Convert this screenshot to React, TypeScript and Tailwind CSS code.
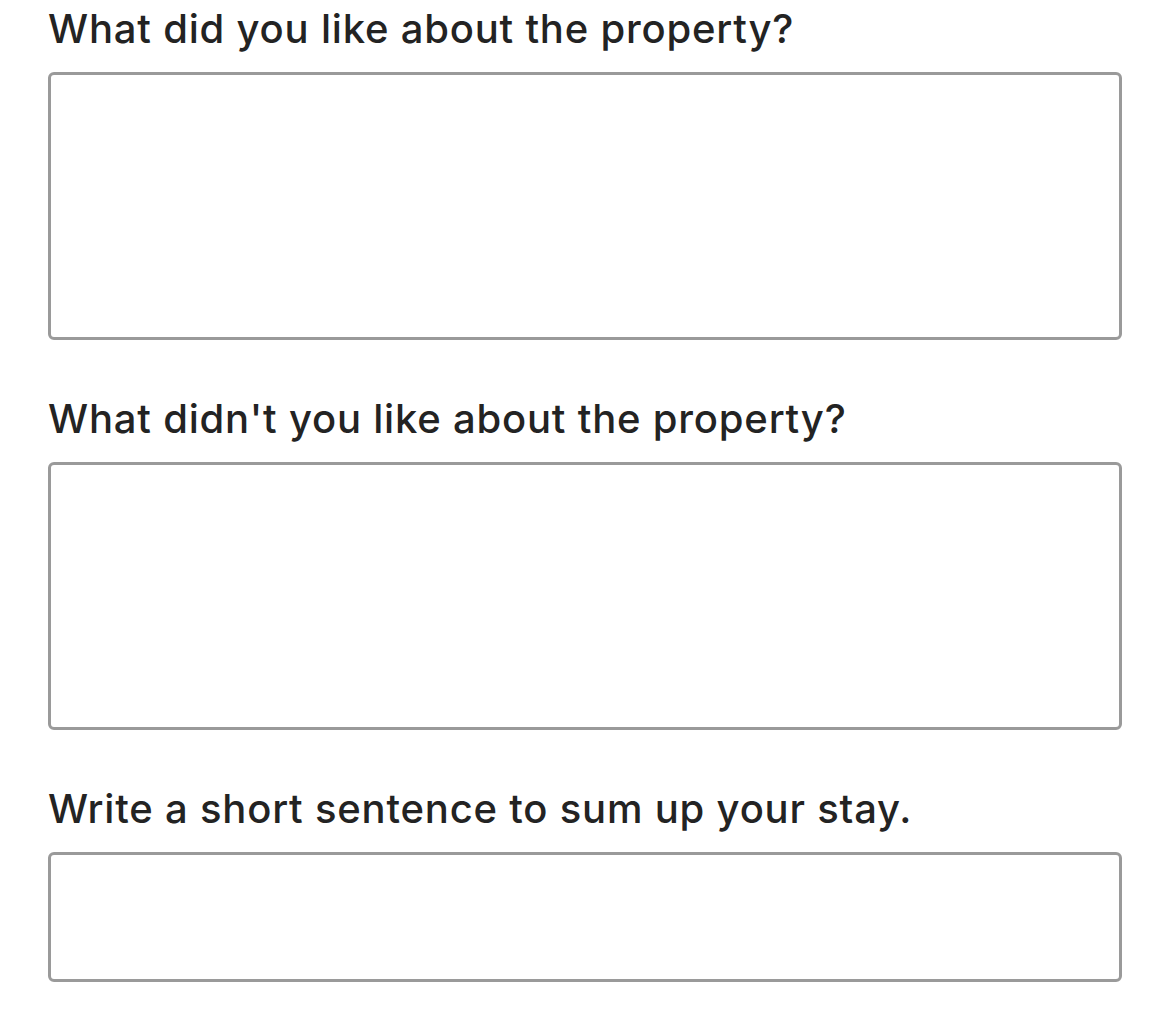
import React from 'react';

interface FieldProps {
  label: string;
  height: string;
  first?: boolean;
}

const Field: React.FC<FieldProps> = ({ label, height, first }) => {
  return (
    <div className={first ? 'pt-[5px]' : 'pt-[55px]'}>
      <label className="block text-[40px] leading-[48px] font-medium text-[#232323] tracking-[0.8px]">
        {label}
      </label>
      <textarea
        className={`mt-[19px] block w-full ${height} resize-none rounded-[6px] border-[3px] border-[#9a9a9a] bg-white outline-none`}
      />
    </div>
  );
};

const App: React.FC = () => {
  return (
    <div
      className="min-h-screen bg-white pl-[48px] pr-[48px]"
      style={{ fontFamily: 'Inter, "Noto Sans", sans-serif' }}
    >
      <Field first label="What did you like about the property?" height="h-[268px]" />
      <Field label="What didn't you like about the property?" height="h-[268px]" />
      <Field label="Write a short sentence to sum up your stay." height="h-[130px]" />
    </div>
  );
};

export default App;
